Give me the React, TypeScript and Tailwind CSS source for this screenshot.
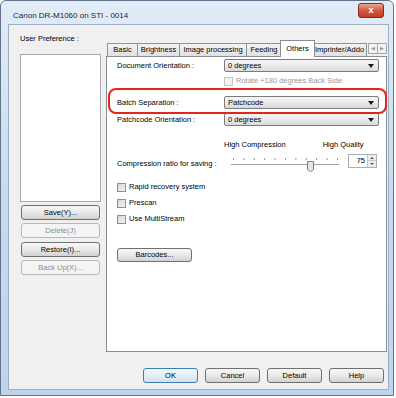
import React from "react";

const btn =
  "flex items-center justify-center rounded-[3px] border border-[#707070] bg-linear-to-b from-[#f7f7f7] via-[#e9e9e9] to-[#d2d2d2] text-black";
const btnOff =
  "flex items-center justify-center rounded-[3px] border border-[#b5b9bc] bg-[#f4f4f4] text-[#8e8e8e]";

const Arrow = () => (
  <svg width="6" height="4" viewBox="0 0 6 4">
    <path d="M0 0h6L3 4z" fill="#1a1a1a" />
  </svg>
);

const Combo = ({ text }: { text: string }) => (
  <div className="w-[155px] h-[13px] rounded-[2px] border border-[#7b7b7b] bg-linear-to-b from-[#f5f5f5] via-[#ebebeb] to-[#d9d9d9] flex items-center pl-[3px] pr-[4px]">
    <span className="flex-1">{text}</span>
    <Arrow />
  </div>
);

const Check = ({ label, disabled = false }: { label: string; disabled?: boolean }) => (
  <div className="flex items-center h-[16px] gap-[3px]">
    <div
      className={
        disabled
          ? "w-[9px] h-[9px] border border-[#c4c4c4] bg-[#f4f4f4]"
          : "w-[9px] h-[9px] border border-[#8f8f8f] bg-linear-to-br from-[#d6d6d6] to-[#f6f6f6]"
      }
    />
    <span className={disabled ? "text-[#9a9a9a]" : ""}>{label}</span>
  </div>
);

const tabs = [
  { label: "Basic", w: 31 },
  { label: "Brightness", w: 43 },
  { label: "Image processing", w: 68 },
  { label: "Feeding", w: 36 },
  { label: "Others", w: 31, active: true },
  { label: "Imprinter/Addo", w: 55 },
];

const Slider = () => (
  <svg width="114" height="18" viewBox="0 0 114 18">
    {Array.from({ length: 11 }).map((_, i) => (
      <rect key={i} x={5 + i * 10.4} y="4" width="1" height="2" fill="#9a9a9a" />
    ))}
    <rect x="3" y="10" width="108" height="1" fill="#a0a0a0" />
    <rect x="3" y="11" width="108" height="1" fill="#ffffff" />
    <path d="M79.5 7.5h6v8l-3 2.5-3-2.5z" fill="#e4e4e4" stroke="#7d7d7d" />
  </svg>
);

export default function App() {
  return (
    <div className="w-[396px] h-[398px] bg-white font-['Liberation_Sans',Arial,sans-serif] text-[7.5px] leading-none text-black">
      <div className="relative w-[394px] h-[396px] rounded-t-[6px] border border-[#62748b] bg-linear-to-b from-[#e2ecf7] via-[#c8daee] to-[#bfd4eb] flex flex-col">
        {/* title bar */}
        <div className="h-[23px] flex items-center pl-[12px] pt-[6px]">
          <span className="text-[8px] text-[#1e1e1e]">Canon DR-M1060 on STI - 0014</span>
        </div>
        <div className="absolute top-[2px] right-[9px] w-[26px] h-[15px] rounded-[3px] border border-[#7a2e22] bg-linear-to-b from-[#eba796] via-[#d35a41] to-[#c43c20] flex items-center justify-center text-white text-[9px] font-bold">
          x
        </div>

        {/* client */}
        <div className="ml-[7px] w-[381px] h-[366px] border border-[#9aaec6] bg-[#f0f0f0] flex flex-col">
          <div className="h-[327px] flex">
            {/* left column */}
            <div className="ml-[11px] w-[81px] flex flex-col">
              <div className="mt-[9px] h-[9px] flex items-center">User Preference :</div>
              <div className="mt-[11px] h-[148px] border border-[#a9a9a9] bg-white" />
              <div className="mt-[3px] ml-[1px] w-[79px] flex flex-col">
                <div className={`${btn} h-[15px]`}>Save(Y)...</div>
                <div className={`${btnOff} h-[15px] mt-[3px]`}>Delete(J)</div>
                <div className={`${btn} h-[15px] mt-[4px]`}>Restore(I)...</div>
                <div className={`${btnOff} h-[15px] mt-[3px]`}>Back Up(X)...</div>
              </div>
            </div>

            {/* tab control */}
            <div className="ml-[5px] w-[281px] flex flex-col mt-[15px]">
              <div className="h-[16px] flex items-end relative z-10 pl-[1px]">
                {tabs.map((t) =>
                  t.active ? (
                    <div
                      key={t.label}
                      style={{ width: t.w + 4 }}
                      className="-mx-[2px] -mb-px h-[17px] border border-b-0 border-[#898c95] bg-white flex items-center justify-center relative z-10"
                    >
                      {t.label}
                    </div>
                  ) : (
                    <div
                      key={t.label}
                      style={{ width: t.w }}
                      className="-ml-px first:ml-0 h-[13px] border border-b-0 border-[#8f939b] bg-linear-to-b from-[#f4f4f4] to-[#e0e0e0] flex items-center justify-center"
                    >
                      {t.label}
                    </div>
                  )
                )}
                <div className="ml-auto mb-[2px] flex">
                  <div className="w-[10px] h-[11px] border border-[#a7a7a7] bg-[#f2f2f2] flex items-center justify-center text-[#9a9a9a] text-[5px]">◀</div>
                  <div className="w-[10px] h-[11px] -ml-px border border-[#a7a7a7] bg-[#f2f2f2] flex items-center justify-center text-[#9a9a9a] text-[5px]">▶</div>
                </div>
              </div>
              <div className="relative h-[296px] border border-[#898c95] bg-white flex flex-col pl-[10px] pr-[7px]">
                <div className="mt-[2px] h-[13px] flex items-center justify-between">
                  <span>Document Orientation :</span>
                  <Combo text="0 degrees" />
                </div>
                <div className="mt-[1px] ml-[107px]">
                  <Check label="Rotate +180 degrees Back Side" disabled />
                </div>
                <div className="mt-[7px] h-[13px] flex items-center justify-between">
                  <span>Batch Separation :</span>
                  <Combo text="Patchcode" />
                </div>
                <div className="mt-[4px] h-[13px] flex items-center justify-between">
                  <span>Patchcode Orientation :</span>
                  <Combo text="0 degrees" />
                </div>
                <div className="mt-[15px] h-[8px] flex items-center">
                  <span className="ml-[107px]">High Compression</span>
                  <span className="ml-[37px]">High Quality</span>
                </div>
                <div className="mt-[5px] h-[18px] flex items-start">
                  <span className="w-[111px] mt-[6px]">Compression ratio for saving :</span>
                  <Slider />
                  <div className="ml-[6px] w-[29px] h-[14px] border border-[#abadb3] bg-white flex items-center">
                    <span className="flex-1 text-right pr-[2px]">75</span>
                    <div className="w-[9px] h-[12px] flex flex-col border-l border-[#c8c8c8]">
                      <div className="h-[6px] bg-[#ececec] border-b border-[#c8c8c8] flex items-center justify-center">
                        <svg width="4" height="2" viewBox="0 0 4 2"><path d="M0 2h4L2 0z" fill="#555" /></svg>
                      </div>
                      <div className="h-[6px] bg-[#ececec] flex items-center justify-center">
                        <svg width="4" height="2" viewBox="0 0 4 2"><path d="M0 0h4L2 2z" fill="#555" /></svg>
                      </div>
                    </div>
                  </div>
                </div>
                <div className="mt-[7px] flex flex-col">
                  <Check label="Rapid recovery system" />
                  <Check label="Prescan" />
                  <Check label="Use MultiStream" />
                </div>
                <div className={`${btn} mt-[21px] w-[75px] h-[14px]`}>Barcodes...</div>

                {/* highlight annotation */}
                <div className="absolute left-[1px] top-[31px] w-[279px] h-[26px] rounded-[8px] border-2 border-[#e3241f]" />
              </div>
            </div>
          </div>

          {/* bottom buttons */}
          <div className="mt-[16px] h-[15px] flex pl-[134px] gap-[7px]">
            <div className="w-[55px] h-[15px] flex items-center justify-center rounded-[3px] border border-[#3c7fb1] bg-linear-to-b from-[#f2f8fc] via-[#e3eff7] to-[#cfe1ee]">
              OK
            </div>
            <div className={`${btn} w-[55px] h-[15px]`}>Cancel</div>
            <div className={`${btn} w-[55px] h-[15px]`}>Default</div>
            <div className={`${btn} w-[55px] h-[15px]`}>Help</div>
          </div>
        </div>
      </div>
    </div>
  );
}
